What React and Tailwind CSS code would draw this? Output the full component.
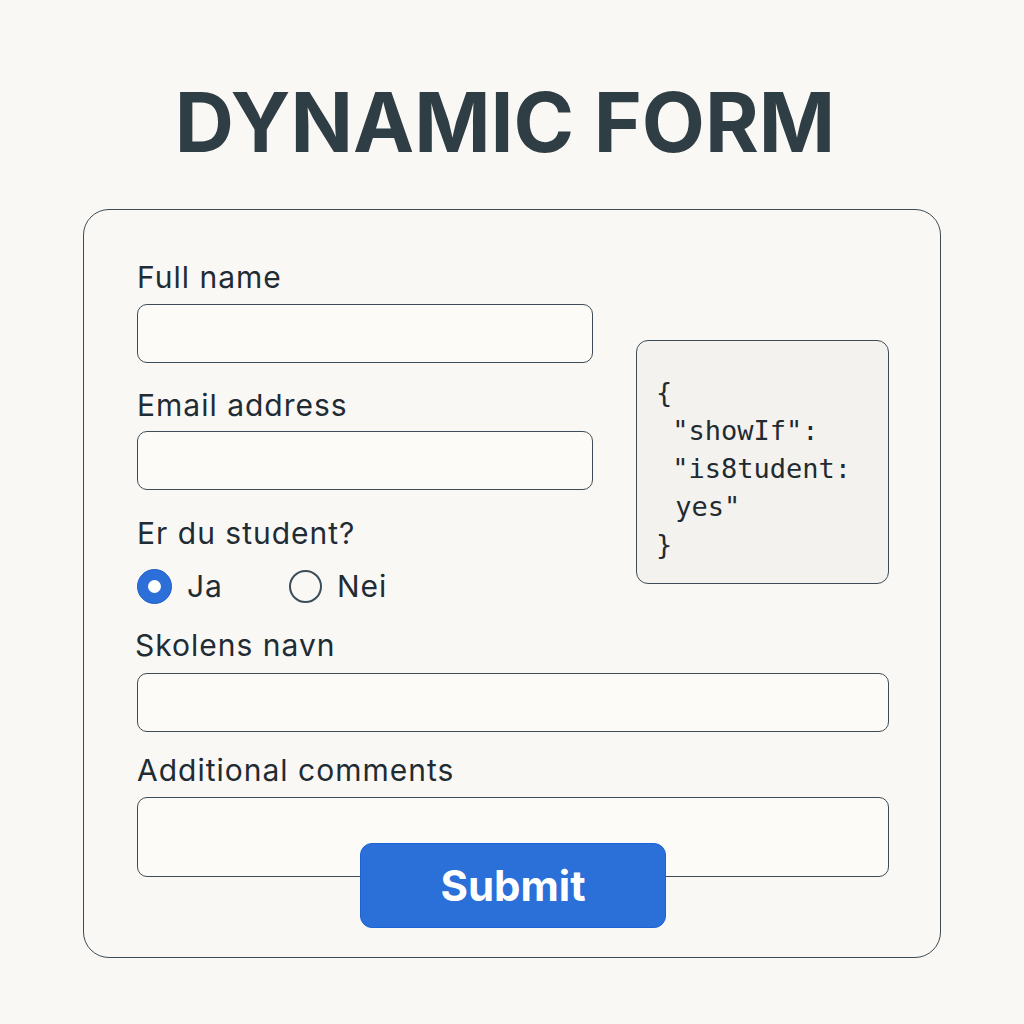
export default function App() {
  return (
    <div className="min-h-screen w-full bg-[#faf8f4] font-['Inter',sans-serif] text-[#1f2c34]">
      <div className="mx-auto flex w-[1024px] flex-col items-center pt-[82px]">
        <h1 className="mr-[14px] text-[82px] leading-none font-bold text-[#2f3d44]">DYNAMIC FORM</h1>

        <div className="mt-[45px] flex w-[858px] flex-col rounded-[26px] border border-[#3d4c56] pt-[50px] pr-[51px] pb-[29px] pl-[53px]">
          <div className="flex items-start gap-[43px]">
            <div className="flex w-[456px] flex-col">
              <Label>Full name</Label>
              <Input className="mt-[10px]" />
              <Label className="mt-[25px]">Email address</Label>
              <Input className="mt-[9px]" />
              <Label className="mt-[26px]">Er du student?</Label>
              <div className="mt-[16px] flex h-[40px] items-center">
                <span className="flex h-[35px] w-[35px] items-center justify-center rounded-full border border-[#1f5fc9] bg-[#2d6fd8]">
                  <span className="h-[13px] w-[13px] rounded-full bg-white" />
                </span>
                <span className="ml-[15px] text-[30px] leading-none tracking-[1px]">Ja</span>
                <span className="ml-[66px] h-[33px] w-[33px] rounded-full border-2 border-[#3b4d58]" />
                <span className="ml-[15px] text-[30px] leading-none tracking-[1px]">Nei</span>
              </div>
            </div>

            <div className="mt-[80px] h-[244px] w-[253px] rounded-[12px] border border-[#3d4c56] bg-[#f4f2ee] pt-[33px] pl-[19px] font-['DejaVu_Sans_Mono',monospace] text-[27px] leading-[38px] whitespace-pre text-[#1f2a31]">
              <div>{'{'}</div>
              <div>{' "showIf":'}</div>
              <div>{' "is8tudent:'}</div>
              <div className="pl-[3px]">{' yes"'}</div>
              <div>{'}'}</div>
            </div>
          </div>

          <Label className="mt-[22px] -ml-[2px]">Skolens navn</Label>
          <Input className="mt-[11px] h-[58px]" />
          <Label className="mt-[21px]">Additional comments</Label>
          <div className="mt-[10px] h-[80px] w-full rounded-[10px] border border-[#3d4c56] bg-[#fcfbf8]" />
          <button className="-mt-[34px] h-[85px] w-[306px] self-center rounded-[12px] border border-[#1d63d4] bg-[#2a70d8] text-[42px] font-bold text-white">
            Submit
          </button>
        </div>
      </div>
    </div>
  );
}

function Label({ children, className = '' }) {
  return <div className={`text-[30px] leading-[34px] tracking-[1px] ${className}`}>{children}</div>;
}

function Input({ className = '' }) {
  return <div className={`h-[59px] w-full rounded-[10px] border border-[#3d4c56] bg-[#fcfbf8] ${className}`} />;
}
